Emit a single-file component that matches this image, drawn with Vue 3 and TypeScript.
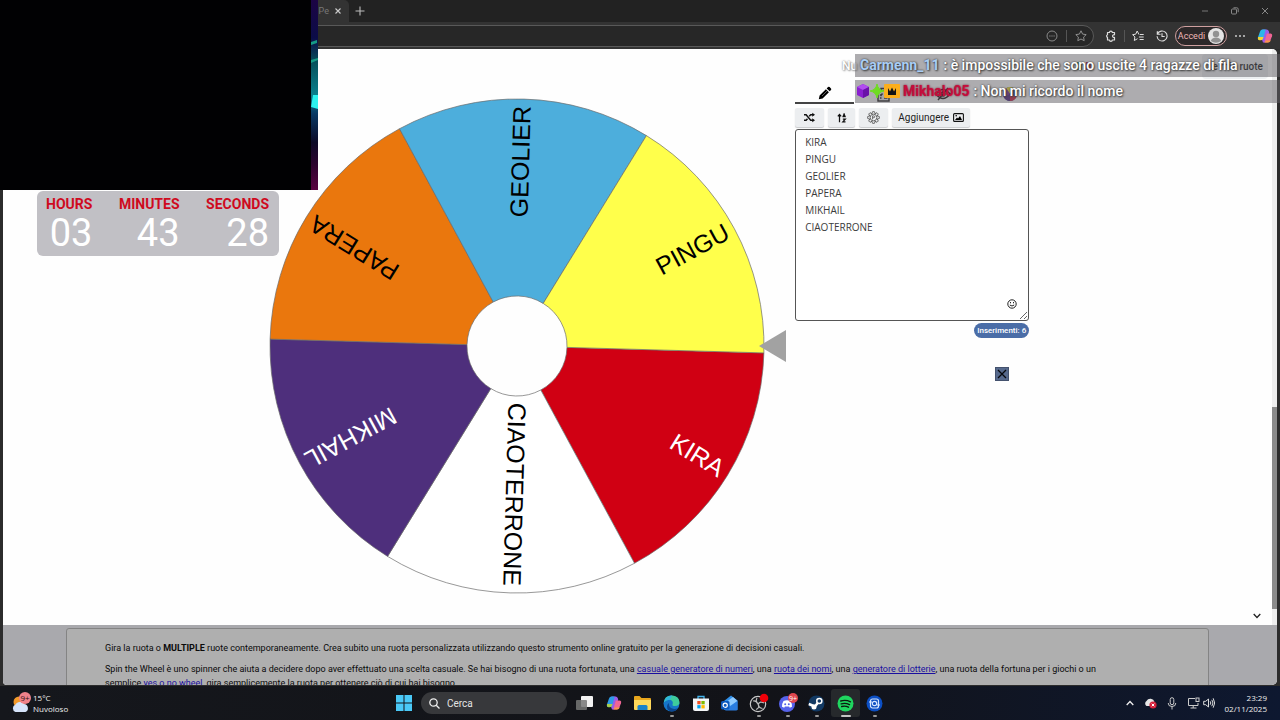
<script setup lang="ts">
import { ref, computed } from 'vue'

interface Slice { name: string; fill: string; ink: string }

const slices: Slice[] = [
  { name: 'KIRA', fill: '#d00013', ink: '#fff' },
  { name: 'CIAOTERRONE', fill: '#ffffff', ink: '#000' },
  { name: 'MIKHAIL', fill: '#4e2f7c', ink: '#fff' },
  { name: 'PAPERA', fill: '#ea770d', ink: '#000' },
  { name: 'GEOLIER', fill: '#4daedc', ink: '#000' },
  { name: 'PINGU', fill: '#ffff4b', ink: '#000' },
]

const entries = ref('KIRA\nPINGU\nGEOLIER\nPAPERA\nMIKHAIL\nCIAOTERRONE')
const entryCount = computed(() => entries.value.split('\n').filter(Boolean).length)

const start = 1.6
const step = 360 / slices.length
const outer = 247
const inner = 50

function point(r: number, deg: number): string {
  const a = (deg * Math.PI) / 180
  return `${(r * Math.cos(a)).toFixed(2)} ${(r * Math.sin(a)).toFixed(2)}`
}

const wedges = slices.map((s, i) => {
  const a = start + i * step
  const b = a + step
  return {
    ...s,
    d: `M${point(inner, a)}L${point(outer, a)}A${outer} ${outer} 0 0 1 ${point(outer, b)}L${point(inner, b)}A${inner} ${inner} 0 0 0 ${point(inner, a)}Z`,
    turn: `rotate(${a + step / 2})`,
  }
})

const timer = [
  { label: 'HOURS', value: '03' },
  { label: 'MINUTES', value: '43' },
  { label: 'SECONDS', value: '28' },
]
</script>

<template>
  <div class="desktop">
    <header class="chrome">
      <div class="tabstrip">
        <div class="tab"><span class="tab-title">e Pe</span>
          <button class="bare" aria-label="Chiudi scheda"><svg width="8" height="8" viewBox="0 0 8 8"><path d="M1.500 1.500l5 5M6.500 1.500L1.500 6.500" stroke="#ccc" stroke-width="1.100" /></svg></button>
        </div>
        <button class="bare plus" aria-label="Nuova scheda"><svg width="10" height="10" viewBox="0 0 10 10"><path d="M5 .5v9M.5 5h9" stroke="#bbb" stroke-width="1.100" /></svg></button>
        <div class="winbtns">
          <button class="bare" aria-label="Riduci"><svg width="8" height="8" viewBox="0 0 8 8"><path d="M1 4h6" stroke="#777" /></svg></button>
          <button class="bare" aria-label="Ripristina"><svg width="8" height="8" viewBox="0 0 8 8" fill="none" stroke="#888"><rect x="0.5" y="2" width="5" height="5" rx="1" /><path d="M2.500 .8h3.300q1.400 0 1.400 1.400v3" /></svg></button>
          <button class="bare" aria-label="Chiudi"><svg width="8" height="8" viewBox="0 0 8 8"><path d="M1 1l6 6M7 1L1 7" stroke="#888" /></svg></button>
        </div>
      </div>
      <div class="toolbar">
        <div class="address">
          <svg width="12" height="12" viewBox="0 0 12 12" fill="none" stroke="#8a8a8a"><circle cx="6" cy="6" r="5" /><path d="M3.300 6h1.200M5.400 6h1.200M7.500 6h1.200" stroke-width="1.200" /></svg>
          <i class="sep"></i>
          <svg width="12" height="12" viewBox="0 0 12 12" fill="none" stroke="#8f8f8f" stroke-linejoin="round"><path d="M6 .8l1.600 3.300 3.600.5-2.600 2.500.6 3.600L6 9 2.800 10.700l.6-3.600L.8 4.600l3.600-.5z" /></svg>
        </div>
        <svg class="tool" width="12" height="12" viewBox="0 0 12 12" fill="none" stroke="#ddd" stroke-width="1.200" stroke-linejoin="round"><path d="M2.500 2.500h2a1.400 1.400 0 0 1 2.800 0h2.200v2.300a1.400 1.400 0 1 0 0 2.600v2.600H7.300a1.400 1.400 0 0 1-2.800 0h-2V7.400a1.400 1.400 0 0 1 0-2.600z" /></svg>
        <i class="sep"></i>
        <svg class="tool" width="12" height="12" viewBox="0 0 12 12" fill="none" stroke="#ddd" stroke-linejoin="round" stroke-linecap="round"><path d="M6.800 4.200L5.200 1 3.700 4.200.6 4.700l2.300 2.200-.6 3.600L5.200 8.900M8.300 4.500h3M7.300 7h4M8 9.500h3.300" /></svg>
        <svg class="tool" width="12" height="12" viewBox="0 0 12 12" fill="none" stroke="#ddd" stroke-width="1.100" stroke-linecap="round"><path d="M1.300 1.500v2.800h2.800M1.500 4a5 5 0 1 1-.4 2.500M6 3.500V6.500h2.300" /></svg>
        <button class="signin">Accedi
          <svg width="16" height="16" viewBox="0 0 16 16"><circle cx="8" cy="8" r="8" fill="#e4e4e4" /><circle cx="8" cy="6" r="3.200" fill="#929292" /><path d="M2.800 13q1-3.500 5.200-3.500t5.200 3.500q-5.200 3.500-10.400 0" fill="#929292" /></svg>
        </button>
        <svg class="tool" width="12" height="12" viewBox="0 0 12 12" fill="#ccc"><circle cx="2" cy="6" r="1" /><circle cx="6" cy="6" r="1" /><circle cx="10" cy="6" r="1" /></svg>
        <svg class="tool" width="16" height="16" viewBox="0 0 16 16"><path d="M5.500 1.500h4.200q1.500 0 2 1.600l.5 1.400-3 8.500q-.6 1.500-2 1.500H6L4 9z" fill="#9b5be8" /><path d="M5.500 1.500h3.300L6.200 10.500q-.5 1.500-2 1.500H2.500Q.3 12 1 9.200l2-5.800q.6-1.900 2.500-1.900" fill="#2cb5e8" /><path d="M1 9h5.500l-.7 2q-.6 1.200-2 1.200H2.500Q.5 12 1 9" fill="#f2d231" /><path d="M9.800 5.500h3.700q2.200 0 1.500 2.800l-1.700 4.400q-.7 1.800-2.500 1.800H7.300z" fill="#f06595" /><path d="M7.400 14.500q1-.4 1.500-2h5l-.6.700q-.8 1.300-2.500 1.300z" fill="#f79a45" /></svg>
      </div>
    </header>

    <main class="page">
      <div class="view">
        <div class="body">
          <nav class="nav">
            <span class="ghost">Nu</span>
            <span class="flag" role="img" aria-label="Italiano"></span>
            <button class="mine">Le mie ruote</button>
          </nav>
          <div class="spin">
            <svg class="wheel" viewBox="-248 -248 516 496" role="img" aria-label="Ruota">
              <path v-for="w in wedges" :key="w.name" :d="w.d" :fill="w.fill" stroke="#6b6b6b" stroke-width="0.7" />
              <text v-for="w in wedges" :key="w.name" :transform="w.turn" x="240" y="7" text-anchor="end" :fill="w.ink">{{ w.name }}</text>
              <path d="M242 0L269 -16V16Z" fill="#a2a2a2" />
            </svg>
            <section class="panel">
              <div class="tabs">
                <button class="ptab on" aria-label="Modifica"><svg width="14" height="14" viewBox="0 0 14 14"><path d="M.8 13.200l.8-3.700 6.300-6.300 3 3-6.300 6.200zM8.700 2.400l1.300-1.300q.8-.7 1.600 0L13 2.500q.6.700 0 1.400l-1.300 1.400z" /><path d="M4 10L9 5" stroke="#888" stroke-width=".7" /></svg></button>
                <button class="ptab" aria-label="Elenco"><svg width="15" height="15" viewBox="0 0 15 15" fill="#eee" stroke="#111" stroke-width="1.400"><rect x="2" y="3" width="11" height="11" /><path d="M5 3V1.500h5V3M4 7.500l1 1 1.500-2M8 7.500h3.500M4 11h1.500M8 11h3.500" /></svg></button>
                <button class="ptab" aria-label="Nascondi"><svg width="16" height="14" viewBox="0 0 16 14" fill="none" stroke="#111" stroke-width="1.400"><path d="M1 7q7-9 14 0-7 9-14 0M3 13L13 1" /><circle cx="8" cy="7" r="2" /></svg></button>
                <button class="ptab last" aria-label="Colori"><svg width="14" height="14" viewBox="0 0 14 14"><circle cx="7" cy="7" r="7" fill="#17348d" /><path d="M7 7L3 1.200A7 7 0 0 1 10 .7z" fill="#eee028" /><path d="M7 7L3 1.200A7 7 0 0 0 1 10.600z" fill="#7c2396" /><path d="M7 7v7a7 7 0 0 0 6.400-4z" fill="#cc1739" /><path d="M7 7l-6 3.600A7 7 0 0 0 7 14z" fill="#4c1c79" /></svg></button>
              </div>
              <div class="actions">
                <button class="act" aria-label="Mescola"><svg width="11" height="11" viewBox="0 0 12 12" fill="none" stroke="#111" stroke-width="1.600"><path d="M0 3h2.300l5 6H10M0 9h2.300l1.500-1.700M5.700 4.700L7.300 3H10" /><path d="M9 .7L12 3 9 5.300zM9 6.700L12 9l-3 2.300z" fill="#111" stroke="none" /></svg></button>
                <button class="act narrow" aria-label="Ordina"><svg width="10" height="10" viewBox="0 0 11 12" fill="none" stroke="#111" stroke-width="1.500"><path d="M2.500 11V2M.5 4l2-2.300 2 2.300M6.500 5l1.500-3.800L9.500 5M6.800 4h2.500M6.500 7.300h3l-3 3.400h3.200" /></svg></button>
                <button class="act" aria-label="Impostazioni"><svg width="13" height="13" viewBox="0 0 14 14" fill="none" stroke="#555" stroke-width=".9"><g v-for="n in 8" :key="n" :transform="`rotate(${n * 45} 7 7)`"><path d="M5.200 3.200L6 .7h2l.8 2.500" /></g><circle cx="7" cy="7" r="3.600" /><path d="M6 9V5.200h1.300q1 0 1 1t-1 1H6.200" /></svg></button>
                <button class="act add">Aggiungere <svg width="11" height="9" viewBox="0 0 11 9"><rect x=".6" y=".6" width="9.800" height="7.800" rx="1" fill="none" stroke="#111" stroke-width="1.100" /><path d="M2 7l2-2.500 1 1L7 3l2 4z" /><circle cx="3.200" cy="2.800" r=".8" /></svg></button>
              </div>
              <div class="editor">
                <textarea v-model="entries" aria-label="Inserimenti" spellcheck="false"></textarea>
                <button class="bare smile" aria-label="Emoji"><svg width="10" height="10" viewBox="0 0 10 10" fill="none" stroke="#222"><circle cx="5" cy="5" r="4.200" /><path d="M3.500 3v1.300M6.500 3v1.300M2.800 6q2.200 2 4.400 0" /></svg></button>
              </div>
              <div class="count">Inserimenti: {{ entryCount }}</div>
              <button class="close" aria-label="Chiudi"><svg width="10" height="10" viewBox="0 0 10 10"><path d="M1 1l8 8M9 1L1 9" stroke="#05070d" stroke-width="1.300" /></svg></button>
            </section>
          </div>
          <button class="bare collapse" aria-label="Riduci sezione"><svg width="8" height="6" viewBox="0 0 8 6"><path d="M.7 1L4 4.500 7.300 1" fill="none" stroke="#222" stroke-width="1.300" /></svg></button>
        </div>
        <div class="scroll"><i class="thumb"></i></div>
      </div>
      <footer class="about">
        <article>
          <p>Gira la ruota o <b>MULTIPLE</b> ruote contemporaneamente. Crea subito una ruota personalizzata utilizzando questo strumento online gratuito per la generazione di decisioni casuali.</p>
          <p>Spin the Wheel è uno spinner che aiuta a decidere dopo aver effettuato una scelta casuale. Se hai bisogno di una ruota fortunata, una <a href="#numeri">casuale generatore di numeri</a>, una <a href="#nomi">ruota dei nomi</a>, una <a href="#lotterie">generatore di lotterie</a>, una ruota della fortuna per i giochi o un semplice <a href="#yesno">yes o no wheel</a>, gira semplicemente la ruota per ottenere ciò di cui hai bisogno.</p>
        </article>
      </footer>
    </main>

    <footer class="taskbar">
      <div class="weather">
        <svg width="21" height="22" viewBox="0 0 21 22"><circle cx="8" cy="10" r="5.500" fill="#f39a2b" /><path d="M4.500 20a4 4 0 0 1 0-7.500 5 5 0 0 1 8.500-.5 4.200 4.200 0 0 1 1.500 8z" fill="#d6e4fb" /><circle cx="14" cy="6" r="6" fill="#f0828a" /><text x="14" y="9" text-anchor="middle" font-size="8" fill="#301010">9+</text></svg>
        <span>15°C<br />Nuvoloso</span>
      </div>
      <div class="dock">
        <button class="cell first" aria-label="Start"><svg width="16" height="16" viewBox="0 0 16 16"><path d="M0 0h7.500v7.500H0zM8.500 0H16v7.500H8.500zM0 8.500h7.500V16H0zM8.500 8.500H16V16H8.500z" fill="#4ac9f7" /></svg></button>
        <label class="search"><svg width="11" height="11" viewBox="0 0 11 11" fill="none" stroke="#eee" stroke-width="1.300"><circle cx="4.500" cy="4.500" r="3.700" /><path d="M7.200 7.200l3.300 3.300" /></svg><input type="text" placeholder="Cerca" aria-label="Cerca" /></label>
        <button class="cell" aria-label="Visualizzazione attività"><svg width="17" height="16" viewBox="0 0 17 16"><rect x="5" y="1" width="12" height="11" rx="1" fill="#f2f2f2" /><rect x="0" y="5" width="11" height="10" rx="1" fill="#777" fill-opacity=".85" /></svg></button>
        <button class="cell" aria-label="Copilot"><svg width="16" height="16" viewBox="0 0 16 16"><path d="M5.500 1.500h4.200q1.500 0 2 1.600l.5 1.400-3 8.500q-.6 1.500-2 1.500H6L4 9z" fill="#9b5be8" /><path d="M5.500 1.500h3.300L6.200 10.500q-.5 1.500-2 1.500H2.500Q.3 12 1 9.200l2-5.800q.6-1.900 2.500-1.900" fill="#2c9be8" /><path d="M1 9h5.500l-.7 2q-.6 1.200-2 1.200H2.500Q.5 12 1 9" fill="#a9cf4a" /><path d="M9.800 5.500h3.700q2.200 0 1.500 2.800l-1.700 4.400q-.7 1.800-2.500 1.800H7.300z" fill="#f06595" /><path d="M7.400 14.500q1-.4 1.500-2h5l-.6.700q-.8 1.300-2.500 1.300z" fill="#f79a45" /></svg></button>
        <button class="cell" aria-label="Esplora file"><svg width="17" height="16" viewBox="0 0 17 16"><path d="M0 2q0-1 1-1h4.500l2 2H16q1 0 1 1v10H0z" fill="#e8a61d" /><path d="M0 5h17v9q0 1-1 1H1q-1 0-1-1z" fill="#ffd95a" /><path d="M3.500 15v-3.500q0-1.500 1.500-1.500h7q1.500 0 1.500 1.500V15z" fill="#1c83c9" /></svg></button>
        <button class="cell run" aria-label="Edge"><svg width="17" height="17" viewBox="0 0 17 17"><circle cx="8.500" cy="8.500" r="8" fill="#1675c8" /><path d="M.8 7.500Q1.500.5 8.500.5q7.500 0 8 6.500 0 4-4.500 4-3.500 0-2.300-2 .8-3.500-3-4.200Q3 4.500.8 7.500" fill="#3ecb9c" /><path d="M.8 7.500Q3 .5 9 .5L7 4.800Q3 4.500.8 7.500" fill="#2fb4e0" /><path d="M6 8q-1 5 5 6 2 .3 4-1-2 3.500-6 3.500Q4 16 4 11.500 4 9 6 8" fill="#0c468f" /></svg></button>
        <button class="cell" aria-label="Store"><svg width="16" height="17" viewBox="0 0 16 17"><path d="M5 4V1.500h6V4" fill="none" stroke="#44b5ed" stroke-width="1.300" /><path d="M0 3.500h16V14q0 2-2 2H2q-2 0-2-2z" fill="#f4f6f8" /><path d="M4.300 6h3.300v3.300H4.300z" fill="#f25022" /><path d="M8.400 6h3.300v3.300H8.400z" fill="#7fba00" /><path d="M4.300 10.100h3.300v3.300H4.300z" fill="#00a4ef" /><path d="M8.400 10.100h3.300v3.300H8.400z" fill="#ffb900" /></svg></button>
        <button class="cell" aria-label="Outlook"><svg width="17" height="16" viewBox="0 0 17 16"><path d="M3 6l7-5.500 6.500 5V15H3z" fill="#2f8fe8" /><path d="M6 6.500L12 2l4.500 4L9 11z" fill="#8fcbff" /><path d="M4 15.500L16.500 6v8q0 1.500-1.500 1.500z" fill="#2a7de0" /><rect y="6" width="8.500" height="8.500" rx="1.500" fill="#0b59bd" /><circle cx="4.200" cy="10.200" r="2.100" fill="none" stroke="#fff" stroke-width="1.200" /></svg></button>
        <button class="cell run" aria-label="OBS"><svg width="20" height="20" viewBox="0 0 20 20"><circle cx="9" cy="11" r="7.700" fill="#17191d" stroke="#c8c8c8" stroke-width="1.200" /><path d="M8 5q-2 4 1.500 6M15 10q-4-2.500-6 1.500M7 16.500q4-1.500 2-5.500M4 8q3-1 5 3M13.500 15.500q-4-.5-4-4" fill="none" stroke="#bbb" stroke-width="1.200" /><circle cx="15" cy="5" r="4.300" fill="#f00008" /></svg></button>
        <button class="cell run" aria-label="Discord"><svg width="20" height="20" viewBox="0 0 20 20"><circle cx="9" cy="11" r="8" fill="#5662ea" /><path d="M5.500 8q3.500-1.400 7 0 1.800 3 1.500 5.700l-2.200 1-.7-1.100H6.900l-.7 1.100-2.200-1Q3.700 11 5.500 8" fill="#fff" /><circle cx="7.200" cy="11.300" r="1" fill="#5662ea" /><circle cx="10.800" cy="11.300" r="1" fill="#5662ea" /><circle cx="15" cy="5" r="5" fill="#e0474f" /><text x="15" y="8" text-anchor="middle" font-size="7" fill="#fff">9+</text></svg></button>
        <button class="cell run" aria-label="Steam"><svg width="17" height="17" viewBox="0 0 17 17"><circle cx="8.500" cy="8.500" r="8" fill="#123963" /><path d="M.8 9l6 2.500 3.400-4" fill="none" stroke="#fff" stroke-width="2.600" /><circle cx="11.300" cy="6" r="3.300" fill="#fff" /><circle cx="11.300" cy="6" r="1.800" fill="#123963" /><circle cx="6" cy="12" r="2.500" fill="#fff" /></svg></button>
        <button class="cell run active" aria-label="Spotify"><svg width="17" height="17" viewBox="0 0 17 17"><circle cx="8.500" cy="8.500" r="8" fill="#1fd65f" /><path d="M3.800 6q5-1.500 9.700.8M4.200 8.800q4.300-1.200 8.300.8M4.700 11.500q3.500-1 6.800.7" fill="none" stroke="#0c1a10" stroke-width="1.400" stroke-linecap="round" /></svg></button>
        <button class="cell run" aria-label="App"><svg width="17" height="17" viewBox="0 0 17 17"><circle cx="8.500" cy="8.500" r="8" fill="#0c4fc4" /><g fill="none" stroke="#d9e8ff" stroke-width="1.200"><rect x="4.500" y="4" width="8" height="9" rx="2" /><circle cx="8.500" cy="8.500" r="2.200" /><path d="M3 7h3M11 10h3" /></g></svg></button>
      </div>
      <div class="tray">
        <svg width="8" height="6" viewBox="0 0 8 6"><path d="M.7 5L4 1.500 7.300 5" fill="none" stroke="#eee" stroke-width="1.300" /></svg>
        <svg width="13" height="12" viewBox="0 0 13 12"><path d="M2.500 9a3 3 0 0 1 0-5 4.300 4.300 0 0 1 8 1v4z" fill="#e6e6e6" /><circle cx="9" cy="8" r="3.600" fill="#d4203b" /><path d="M7.700 6.700l2.600 2.600M10.300 6.700L7.700 9.300" stroke="#fff" /></svg>
        <svg width="10" height="13" viewBox="0 0 10 13" fill="none" stroke="#ccc"><rect x="3.200" y=".7" width="3.600" height="7" rx="1.800" /><path d="M1.200 6q0 3.500 3.800 3.500T8.800 6M5 9.500v3" /></svg>
        <div class="pair">
          <svg width="13" height="12" viewBox="0 0 13 12" fill="none" stroke="#ccc"><path d="M8 1.500H1.500v7H11V6M3.500 11h6M6.200 8.500V11" /><rect x="9" y="1" width="3" height="3.500" /></svg>
          <svg width="12" height="12" viewBox="0 0 12 12" fill="none" stroke="#ddd"><path d="M.7 4.300h2L5.500 2v8L2.700 7.700h-2zM7.200 4.300q1.200 1.700 0 3.400M8.800 2.800q2.300 3.200 0 6.400M10.200 1.300q3 4.700 0 9.400" /></svg>
        </div>
        <div class="clock">23:29<br />02/11/2025</div>
      </div>
    </footer>

    <div class="cam"><svg class="cam-edge" viewBox="0 0 7 190" preserveAspectRatio="none"><defs><linearGradient id="glow" x2="0" y2="1"><stop offset="0" stop-color="#1c0444" /><stop offset=".2" stop-color="#0b0c48" /><stop offset=".33" stop-color="#07515c" /><stop offset=".5" stop-color="#0a7f8c" /><stop offset=".6" stop-color="#083863" /><stop offset=".75" stop-color="#0c0a26" /><stop offset=".86" stop-color="#2b042e" /><stop offset="1" stop-color="#5a0340" /></linearGradient></defs><path d="M0 0h7v190H0z" fill="url(#glow)" /><path d="M0 42l6-2v3l-6 2zM0 60l7 -2v2l-7 3z" fill="#159b86" /><path d="M2 95h5v14l-7-2z" fill="#2cf1ee" /></svg></div>

    <div class="timer">
      <div v-for="t in timer" :key="t.label" class="unit"><span class="lab">{{ t.label }}</span><span class="num">{{ t.value }}</span></div>
    </div>

    <div class="chat">
      <div class="msg"><b class="blue">Carmenn_11</b><span>: è impossibile che sono uscite 4 ragazze di fila</span></div>
      <div class="msg">
        <span class="badges">
          <svg width="14" height="14" viewBox="0 0 14 14"><path d="M7 0l6 3v8l-6 3-6-3V3z" fill="#8a1fd0" /><path d="M7 0l6 3-6 3-6-3z" fill="#b14df0" /><path d="M7 6l6-3v8l-6 3z" fill="#6a12a8" /></svg>
          <svg width="14" height="14" viewBox="0 0 14 14"><path d="M7 0q1 6 7 7-6 1-7 7-1-6-7-7 6-1 7-7" fill="#6fdc22" stroke="#6fdc22" /></svg>
          <svg width="16" height="14" viewBox="0 0 16 14"><rect width="16" height="14" rx="1" fill="#fbae1c" /><path d="M4 11V4l2 3.500L8 3.500l2 4L12 4v7z" fill="#141414" /></svg>
        </span>
        <b class="red">Mikhalo05</b><span>: Non mi ricordo il nome</span>
      </div>
    </div>
  </div>
</template>

<style>
html, body { margin: 0; background: #2a2a2a; }
</style>

<style scoped>
* { box-sizing: border-box; }
.desktop { position: relative; display: flex; flex-direction: column; height: 100vh; min-height: 600px; overflow: hidden; font-family: Roboto, "Liberation Sans", sans-serif; background: #2c2c2c; }
button { font: inherit; border: 0; padding: 0; cursor: pointer; display: flex; align-items: center; justify-content: center; }
svg { flex: none; }
.bare { background: none; }

.chrome { flex: none; height: 49px; background: #333; color: #ddd; }
.tabstrip { display: flex; align-items: center; height: 22px; background: #222; padding-left: 300px; padding-right: 11px; }
.tab { display: flex; align-items: center; justify-content: flex-end; gap: 5px; width: 49px; height: 22px; padding-right: 7px; border-radius: 0 5px 0 0; background: #333; font-size: 9px; }
.tab-title { color: #777; white-space: nowrap; }
.plus { margin-left: 6px; }
.winbtns { display: flex; gap: 22px; margin-left: auto; }
.toolbar { display: flex; align-items: center; height: 27px; padding: 0 7px 0 3px; }
.address { flex: 1; display: flex; align-items: center; justify-content: flex-end; gap: 8px; height: 22px; padding-right: 6px; margin-right: 5px; border: 1px solid #595959; border-radius: 11px; background: #272727; }
.sep { width: 1px; height: 12px; background: #555; }
.tool { margin: 0 6px; }
.tool + .sep { margin: 0 1px; }
.toolbar > .tool:last-child { margin: 0 0 0 5px; }
.signin { gap: 3px; width: 52px; height: 20px; margin: 0 1px; border: 1px solid #cfa0a0; border-radius: 10px; background: #2c2829; color: #efb7b7; font-size: 9px; }

.page { flex: 1; min-height: 0; display: flex; flex-direction: column; margin: 0 3px; border-radius: 4px 5px 5px 4px; background: #fefefe; overflow: hidden; }
.view { flex: 1; min-height: 0; display: flex; }
.body { flex: 1; min-width: 0; display: flex; flex-direction: column; }
.nav { display: flex; align-items: center; height: 34px; padding: 0 4px 0 839px; font-size: 12px; }
.ghost { color: #fff; font-weight: 500; text-shadow: 0 0 2px #777, 1px 1px 2px #999; }
.flag { width: 14px; height: 8px; margin-left: auto; background: linear-gradient(90deg, #0a8a4a 33%, #fff 33% 66%, #c8102e 66%); }
.mine { width: 66px; height: 25px; margin-left: 111px; border-radius: 4px; background: #eef0f2; font-size: 10px; font-weight: 500; color: #111; }
.spin { flex: 1; min-height: 0; display: grid; grid-template-columns: 271fr 517px 234px 238fr; column-gap: 9px; margin-left: -9px; margin-top: 1px; }
.wheel { grid-column: 2; width: 516px; height: 496px; margin-top: 14px; overflow: visible; font: 25px "Liberation Sans", Arial, sans-serif; }
.panel { display: flex; flex-direction: column; }
.tabs { display: flex; height: 20px; }
.ptab { flex: none; width: 59px; background: none; }
.ptab.last { width: 76px; }
.on { border-bottom: 2px solid #444; }
.actions { display: flex; gap: 4px; margin: 4px 0 2px; }
.act { width: 29px; height: 19px; border-radius: 2px; background: #eceef0; box-shadow: 0 1px 1px #c8cacc; color: #222; }
.narrow { width: 27px; }
.add { width: 78px; gap: 4px; font-size: 10px; }
.editor { position: relative; display: flex; }
textarea { flex: 1; height: 192px; margin: 0; padding: 4px 9px; border: 1px solid #555; border-radius: 3px; background: #fff; color: #3c3c3c; font: 10px/17px "Open Sans", sans-serif; outline: 0; }
.smile { position: absolute; right: 12px; bottom: 12px; }
.count { align-self: flex-end; margin-top: 2px; padding: 0 3px; border-radius: 8px; background: #4a6da7; color: #fff; font-size: 8px; font-weight: 500; line-height: 15px; }
.close { align-self: flex-end; width: 14px; height: 14px; margin: 29px 20px 0 0; background: #56698c; border: 1px solid #44526e; }
.collapse { align-self: flex-end; width: 30px; height: 18px; }
.scroll { width: 5px; background: #eee; display: flex; flex-direction: column; justify-content: flex-end; padding-bottom: 16px; }
.thumb { height: 36%; background: #8b8b8b; }

.about { flex: none; height: 60px; padding: 3px 67px 0 63px; background: #a9a9ad; overflow: hidden; }
article { height: 90px; padding: 12px 90px 12px 38px; margin-right: 1px; border: 1px solid #848484; border-radius: 3px; background: #afafaf; color: #0a0a0a; font-size: 9px; line-height: 14px; }
p { margin: 0 0 7px; }
b { font-weight: 700; }
a { color: #1a0fa0; }

.taskbar { flex: none; display: grid; grid-template-columns: 1fr auto 1fr; align-items: center; height: 34px; margin-top: 1px; background: linear-gradient(90deg, #15171c, #121318 60%, #0e1830); color: #eee; font: 8px/11px "Open Sans", sans-serif; }
.weather { display: flex; align-items: center; gap: 1px; padding-left: 11px; }
.dock { display: flex; align-items: center; }
.cell { position: relative; width: 29px; height: 28px; background: none; border-radius: 3px; }
.first { width: 26px; margin-right: 4px; }
.search { display: flex; align-items: center; gap: 5px; width: 146px; height: 22px; margin-right: 3px; padding-left: 8px; border-radius: 11px; background: #37383b; }
.search input { flex: 1; min-width: 0; border: 0; background: none; color: #eee; font: 10px Roboto, sans-serif; outline: 0; }
.search input::placeholder { color: #e4e4e4; }
.run::after { content: ""; position: absolute; left: 50%; bottom: 0; width: 4px; height: 2px; margin-left: -2px; border-radius: 1px; background: #999; }
.active { background: #26292c; }
.active::after { width: 10px; margin-left: -5px; background: #c4c4c4; }
.tray { display: flex; align-items: center; justify-content: flex-end; gap: 10px; padding-right: 13px; }
.pair { display: flex; gap: 3px; }
.clock { text-align: right; }

.cam { position: absolute; left: 0; top: 0; width: 318px; height: 190px; background: #010103; display: flex; justify-content: flex-end; }
.cam-edge { width: 7px; height: 190px; }
.timer { position: absolute; left: 37px; top: 191px; display: flex; justify-content: space-between; width: 242px; height: 65px; padding: 5px 10px 5px 9px; border-radius: 6px; background: #c1c0c5; }
.unit { display: flex; flex-direction: column; align-items: flex-end; }
.lab { color: #cf0a1e; font-size: 14px; font-weight: 700; line-height: 17px; }
.num { color: #fff; font-size: 38px; line-height: 41px; }
.chat { position: absolute; left: 855px; right: 0; top: 54px; display: flex; flex-direction: column; gap: 3px; color: #fff; font-size: 14px; font-weight: 500; text-shadow: 0 0 2px #333, 1px 1px 2px #444; }
.msg { display: flex; align-items: center; gap: 4px; height: 23px; padding: 0 0 2px 5px; white-space: nowrap; background: rgba(98, 96, 102, .52); }
.badges { display: flex; margin: 0 -4px 0 -4px; }
.blue { color: #a9cdf5; }
.red { color: #c60d3c; text-shadow: 0 0 2px #7a0a28; margin-left: 3px; }
</style>
